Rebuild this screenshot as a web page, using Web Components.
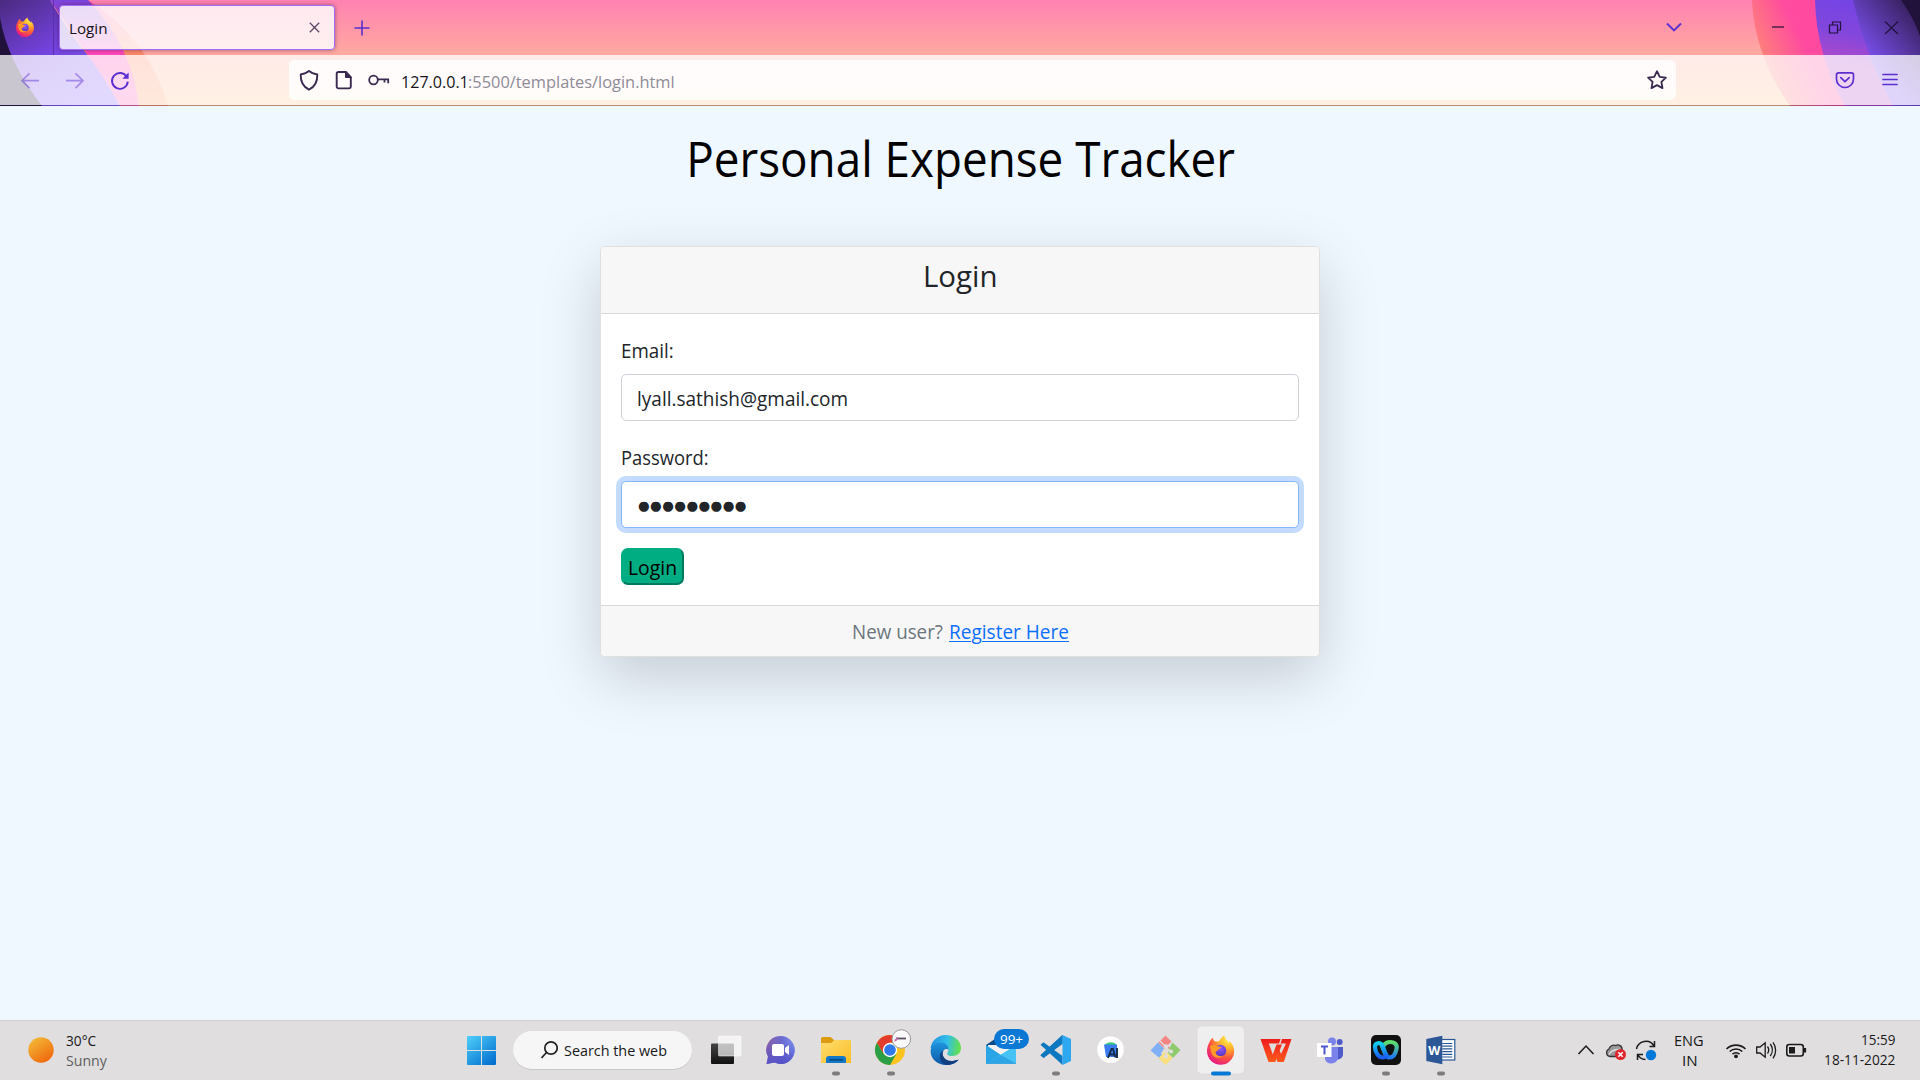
<!DOCTYPE html>
<html lang="en">
<head>
<meta charset="utf-8">
<title>Login</title>
<style>
html,body{margin:0;padding:0}
body{width:1920px;height:1080px;overflow:hidden;background:#eff7ff;font-family:"Open Sans","Noto Sans",sans-serif;color:#212529;display:flex;flex-direction:column}
</style>
</head>
<body>
<browser-chrome></browser-chrome>
<login-page></login-page>
<task-bar></task-bar>
<script>
const define = (name, html, after) => {
  const tpl = document.createElement('template');
  tpl.innerHTML = html;
  customElements.define(name, class extends HTMLElement {
    connectedCallback() {
      if (this.shadowRoot) return;
      this.attachShadow({mode: 'open'}).appendChild(tpl.content.cloneNode(true));
      if (after) after(this);
    }
  });
};

/* Single-line label whose visible glyphs span exactly the width in "w". */
const pen = document.createElement('canvas').getContext('2d');
define('fit-text', `<style>
:host{display:block;flex:none;white-space:nowrap}
span{display:inline-block;transform-origin:0 50%}
:host([underline]) span{text-decoration:underline;text-decoration-thickness:1.3px;text-underline-offset:2px;text-decoration-skip-ink:auto}
</style><span><slot></slot></span>`, el => {
  const w = parseFloat(el.getAttribute('w'));
  const cs = getComputedStyle(el);
  pen.font = cs.fontWeight + ' ' + cs.fontSize + ' ' + cs.fontFamily;
  const m = pen.measureText(el.textContent);
  const k = w / (m.actualBoundingBoxRight + m.actualBoundingBoxLeft);
  el.style.width = w + 'px';
  el.shadowRoot.querySelector('span').style.transform = `translateX(${m.actualBoundingBoxLeft * k}px) scaleX(${k})`;
});

define('theme-art', `<style>:host{display:block}svg{display:block}</style>
<svg width="1920" height="106" viewBox="0 0 1920 106">
<defs>
<linearGradient id="base" x1="0" y1="0" x2="0" y2="1"><stop offset="0" stop-color="#ff82b2"/><stop offset=".5" stop-color="#ffa8a0"/><stop offset="1" stop-color="#ffc488"/></linearGradient>
<linearGradient id="lp" x1="0" y1="0" x2=".7" y2="1"><stop offset="0" stop-color="#4a2a80"/><stop offset=".5" stop-color="#7442dd"/><stop offset="1" stop-color="#8860ff"/></linearGradient>
<linearGradient id="lk" x1="0" y1="0" x2="0" y2="1"><stop offset="0" stop-color="#7c45dd"/><stop offset=".25" stop-color="#b845cf"/><stop offset=".5" stop-color="#ff45b8"/><stop offset="1" stop-color="#ff6bbb"/></linearGradient>
<linearGradient id="lo" x1="0" y1="0" x2="0" y2="1"><stop offset="0" stop-color="#ff4aa2"/><stop offset=".45" stop-color="#fb846a"/><stop offset="1" stop-color="#ffa06c"/></linearGradient>
<linearGradient id="ro" gradientUnits="userSpaceOnUse" x1="1756" y1="40" x2="1794" y2="22"><stop offset="0" stop-color="#ff7e7c"/><stop offset="1" stop-color="#ff4aa0"/></linearGradient>
<linearGradient id="rp" gradientUnits="userSpaceOnUse" x1="1850" y1="0" x2="1838" y2="65"><stop offset="0" stop-color="#7444e4"/><stop offset=".5" stop-color="#8246dc"/><stop offset="1" stop-color="#b44bc9"/></linearGradient>
<linearGradient id="rd" gradientUnits="userSpaceOnUse" x1="1865" y1="55" x2="1912" y2="16"><stop offset="0" stop-color="#7b50ef"/><stop offset="1" stop-color="#3c2468"/></linearGradient>
</defs>
<rect width="1920" height="106" fill="url(#base)"/>
<path d="M88 0Q150 40 168 106H120L50 0Z" fill="url(#lo)"/>
<path d="M50 0H88Q132 46 139 106H120L86 52Z" fill="url(#lk)"/>
<path d="M0 0H50Q66 28 86 53Q104 76 120 106H0Z" fill="url(#lp)"/>
<path d="M0 18Q8 62 42 106H0Z" fill="#20123a"/>
<path d="M1752 0Q1754 54 1790 106H1850V0Z" fill="url(#ro)"/>
<path d="M1815 0Q1816 54 1845 106H1900V0Z" fill="url(#rp)"/>
<path d="M1853 0Q1866 56 1893 106H1920V0Z" fill="url(#rd)"/>
<path d="M1901 0Q1914 18 1920 36V0Z" fill="#20123a"/>
<rect y="55" width="1920" height="50" fill="#fff" fill-opacity=".76"/>
<rect y="105" width="1920" height="1" fill="#20123a" fill-opacity=".32"/>
<rect x="53" width="1" height="55" fill="#5a2fae"/>
</svg>`);

const foxDefs = `<defs>
<radialGradient id="fx" cx=".78" cy=".1" r="1"><stop offset="0" stop-color="#fff44f"/><stop offset=".35" stop-color="#ffb02c"/><stop offset=".65" stop-color="#ff5a3c"/><stop offset="1" stop-color="#e31587"/></radialGradient>
<radialGradient id="fg" cx=".5" cy=".3" r=".7"><stop offset="0" stop-color="#9059ff"/><stop offset="1" stop-color="#5b35c0"/></radialGradient></defs>`;
const fox = `<path d="M3 5C4 3 5 2 6 0.8C6.4 2.8 7.4 4 8.6 4.7L12 4.6C13.5 3.6 13.6 1.4 17.5-1.2C18 1 19 2.5 20.6 3.8L22 6.5C22.4 5.6 22.6 5 22.5 4C27.5 8.4 28.3 14.4 26.7 19C24.6 24.7 19.7 28 14 28C6.5 28 0.6 22.3 .3 14.8C.2 11 1.5 7.6 3 5Z" fill="url(#fx)"/>
<circle cx="13.8" cy="13.8" r="5.8" fill="url(#fg)"/>
<path d="M3.5 9.2C6.5 7.4 9.6 8.3 11 9.6L14.6 10.2C14.2 11.7 12 12.2 11.3 13.2C10.7 14.6 9.3 14.3 8.8 15.8C9.5 19 13 20.3 16.6 18.7C13 22.5 6.3 21.8 4.5 15.6Z" fill="#ff9a26"/>`;

define('browser-chrome', `<style>
:host{display:grid;height:106px;flex:none;width:1920px;overflow:hidden}
:host>*{grid-area:1/1}
svg{display:block;flex:none}
.rows{display:flex;flex-direction:column;min-width:0}
.tabs{display:flex;height:55px;align-items:center}
.pin{margin:-2px 0 0 15px}
.tab{box-sizing:border-box;width:276px;height:45px;margin:0 18.5px 0 24px;border:1px solid #a46cf6;border-radius:4px;background:rgba(255,255,255,.82);box-shadow:0 0 4px rgba(60,20,60,.5);display:flex;align-items:center;justify-content:space-between;padding:1px 14px 0 9.5px;font-size:14.7px;line-height:20px;color:#15141a}
.win{margin-left:auto}
.nav{display:flex;height:50px;align-items:center}
.url{box-sizing:border-box;width:1387px;height:40px;border-radius:5px;background:rgba(255,255,255,.82);display:flex;align-items:center;margin-left:149px;padding:0 7px 0 8px;font-size:16.4px;line-height:24px}
.url svg{margin-right:11px}
.dim{color:#8f8b97}.url fit-text{padding-top:4px}
.star.star{margin:0 0 0 auto}
</style>
<theme-art></theme-art>
<div class="rows">
<div class="tabs">
 <svg class="pin" width="20" height="20" viewBox="-.5 -2 29 30">${foxDefs}${fox}</svg>
 <div class="tab"><fit-text w="36.5">Login</fit-text><svg width="11" height="11" viewBox="0 0 11 11" style="margin-top:-2px" stroke="#5b4a66" stroke-width="1.3"><path d="M.8 .8l9.4 9.4M10.2 .8L.8 10.2"/></svg></div>
 <svg width="16" height="16" viewBox="0 0 16 16" stroke="#5b2fd0" stroke-width="1.6"><path d="M8 .5v15M.5 8h15"/></svg>
 <svg class="win" width="260" height="40" viewBox="1660 7.5 260 40" fill="none" stroke="#20123a" stroke-width="1.2">
  <path d="M1667 23l7 7 7-7" stroke="#5b2fd0" stroke-width="1.9"/><path d="M1772 26.5h12"/><path d="M1829.5 24.5h8v8h-8zM1832.500 24.500v-3h8v8h-3"/><path d="M1885 21l13 12.500M1898 21l-13 12.500"/></svg>
</div>
<div class="nav">
 <svg width="140" height="50" viewBox="0 55 140 50" fill="none" stroke="#5b2fd0" stroke-width="1.7"><g opacity=".45"><path d="M39 80.700H22M29.500 73.300L22 80.700l7.500 7.400M66 80.700h17M75.500 73.300l7.500 7.400-7.500 7.400"/></g>
 <path stroke-width="1.9" d="M126.800 77a7.900 7.900 0 1 0 1 4.700"/><path d="M128.600 72.500v6.300h-6.300z" fill="#5b2fd0" stroke="none"/></svg>
 <div class="url">
  <svg width="24" height="24" viewBox="0 0 24 24" fill="none" stroke="#3a2a50" stroke-width="1.9" stroke-linejoin="round"><path d="M12 3C14 4.800 17.500 6 20.300 6.500C20.500 13 18.500 18.500 12 21.700C5.500 18.500 3.500 13 3.700 6.500C6.500 6 10 4.800 12 3Z"/></svg>
  <svg width="24" height="24" viewBox="0 0 24 24" fill="none" stroke="#3a2a50" stroke-width="1.9" stroke-linejoin="round"><path d="M14 4H6.500a1.800 1.800 0 0 0-1.800 1.800v12.800a1.800 1.800 0 0 0 1.800 1.800h10.500a1.800 1.800 0 0 0 1.800-1.800V9.200z"/><path d="M13.500 3.500v6h6z" fill="#3a2a50" stroke-width="1"/></svg>
  <svg width="24" height="24" viewBox="0 0 24 24" fill="none" stroke="#3a2a50" stroke-width="1.800"><circle cx="6.500" cy="12" r="4.300"/><path d="M10.800 11.300h10.400v4M17.500 11.300v3.300"/></svg>
  <fit-text w="63.500" style="color:#15141a">127.0.0.1</fit-text><fit-text w="204.500" class="dim" style="margin-left:3px">:5500/templates/login.html</fit-text>
  <svg class="star" width="24" height="24" viewBox="0 0 24 24" fill="none" stroke="#3a2a50" stroke-width="1.800" stroke-linejoin="round"><path d="M12 3.200l2.700 5.600 6.200.8-4.500 4.300 1.100 6.200-5.500-3-5.500 3 1.100-6.200-4.500-4.300 6.200-.8z"/></svg>
 </div>
 <svg style="margin-left:auto" width="90" height="50" viewBox="1830 55 90 50" fill="none" stroke="#5b2fd0" stroke-width="1.700" stroke-linecap="round" stroke-linejoin="round"><path d="M1838.500 72.800h13a2 2 0 0 1 2 2v4.200a8.500 8.500 0 0 1-17 0v-4.200a2 2 0 0 1 2-2zM1840.800 77.700l4.200 4 4.200-4M1883 74.500h14M1883 79.500h14M1883 84.500h14"/></svg>
</div>
</div>`);

define('form-field', `<style>
:host{display:flex;flex-direction:column;gap:8px;line-height:30px}
.box{box-sizing:border-box;height:47px;border:1px solid #ced4da;border-radius:5px;background:#fff;display:flex;align-items:center;padding:2px 0 0 16px}
:host([focused]) .box{border-color:#86b7fe;box-shadow:0 0 0 5px #c2dbfe}
</style><slot name="label"></slot><div class="box"><slot></slot></div>`);

define('login-card', `<style>
:host{display:flex;flex-direction:column;box-sizing:border-box;width:720px;height:411px;border:1px solid #dfdfdf;border-radius:5px;background:#fff;box-shadow:0 20px 60px rgba(0,0,0,.175);font-size:19.6px;overflow:visible}
header{box-sizing:border-box;height:67px;border-bottom:1px solid #d9d9d9;background:#f7f7f7;border-radius:4px 4px 0 0;display:flex;padding:11px 0 0 324px;font-size:29.400px;line-height:36px}
main{display:flex;flex-direction:column;padding:22px 20px 0;height:291px;box-sizing:border-box}
form-field+form-field{margin-top:22px}
.dots{font-family:"DejaVu Sans";font-size:13.400px;letter-spacing:.420px;margin-top:1px}
button{all:unset;box-sizing:border-box;width:63px;height:37px;margin-top:20px;border:2px solid;border-color:#00ad82 #007a5c #007a5c #00ad82;border-radius:7px;background:#00ad82;color:#000;padding:2px 0 0 6px;line-height:32px}
footer{box-sizing:border-box;height:51px;border-top:1px solid #d9d9d9;background:#f7f7f7;border-radius:0 0 4px 4px;display:flex;justify-content:center;gap:7px;line-height:52px;color:#6c757d;padding-left:1px}
.link{color:#0d6efd}
</style>
<header><fit-text w="70.500">Login</fit-text></header>
<main>
<form-field><fit-text slot="label" w="50.500" style="margin-left:1px">Email:</fit-text><fit-text w="209">lyall.sathish@gmail.com</fit-text></form-field>
<form-field focused><fit-text slot="label" w="85.500" style="margin-left:1px">Password:</fit-text><span class="dots">●●●●●●●●●</span></form-field>
<button><fit-text w="47">Login</fit-text></button>
</main>
<footer><fit-text w="89.500">New user?</fit-text><fit-text class="link" underline w="118">Register Here</fit-text></footer>`);

define('login-page', `<style>
:host{display:flex;flex-direction:column;align-items:center;height:914px;flex:none;background:#eff7ff;padding-top:22px;box-sizing:border-box}
h1{margin:0 0 58px;font-weight:400;font-size:49px;line-height:60px;color:#000;padding-left:4px}
</style><h1><fit-text w="545">Personal Expense Tracker</fit-text></h1><login-card></login-card>`);

const icons = {
task:`<defs><linearGradient id="a" x1="0" y1="0" x2="0" y2="1"><stop offset="0" stop-color="#444"/><stop offset="1" stop-color="#111"/></linearGradient></defs><rect x="13" y="23.500" width="23" height="20.500" rx="1" fill="url(#a)"/><rect x="20.500" y="16" width="22.500" height="20" rx="1" fill="#fff" fill-opacity=".68" stroke="#fff" stroke-opacity=".5"/>`,
chat:`<defs><linearGradient id="a" x1="0" y1="0" x2="1" y2="0"><stop offset="0" stop-color="#8c61a6"/><stop offset=".55" stop-color="#6a6ad0"/><stop offset="1" stop-color="#7b93ee"/></linearGradient><linearGradient id="b" x1="0" y1="0" x2="0" y2="1"><stop offset=".2" stop-color="#5552c8" stop-opacity="0"/><stop offset="1" stop-color="#5552c8"/></linearGradient></defs><path d="M27.500 16a14 14 0 1 1-6 26.500L13.500 44l1.500-7.200A14 14 0 0 1 27.500 16z" fill="url(#a)"/><path d="M27.500 16a14 14 0 1 1-6 26.500L13.500 44l1.500-7.200A14 14 0 0 1 27.500 16z" fill="url(#b)"/><rect x="19" y="24" width="12" height="12" rx="2" fill="#fff"/><path d="M32 28l4-3v10l-4-3z" fill="#fff"/>`,
files:`<defs><linearGradient id="a" x1="0" y1="0" x2="1" y2="1"><stop offset="0" stop-color="#ffdd70"/><stop offset="1" stop-color="#fbbd25"/></linearGradient></defs><path d="M13 18.500a1.500 1.500 0 0 1 1.500-1.500h8l3.500 3h15.500a1.500 1.500 0 0 1 1.500 1.500V30H13z" fill="#dc9b10"/><path d="M13 23h10l3.500-3H41.500a1.500 1.500 0 0 1 1.500 1.500V43H13z" fill="url(#a)"/><path d="M18 43v-4a3 3 0 0 1 3-3h14a3 3 0 0 1 3 3v4z" fill="#1478c9"/><path d="M21 39.800h14" stroke="#074e88" stroke-width="1.800"/>`,
chrome:`<g transform="translate(1 0)"><circle cx="26" cy="30" r="15" fill="#fcc31e"/><path d="M13 22.500A15 15 0 0 0 26 45l6.500-11.300L26 30l-6.500 3.700z" fill="#2c9f46"/><path d="M13 22.500A15 15 0 0 1 39 22.500H26l-6.500 11.200z" fill="#e33b2e"/><circle cx="26" cy="30" r="7.200" fill="#fff"/><circle cx="26" cy="30" r="5.800" fill="#3079ea"/></g><circle cx="38.300" cy="19" r="9.300" fill="#fafafa" stroke="#999" stroke-width="1"/><path d="M33 18.500h10" stroke="#5c5060" stroke-width="1.800" fill="none"/><path d="M31.500 20.500q2 0 3-3" stroke="#c466b0" stroke-width="1.800" fill="none"/>`,
edge:`<defs><linearGradient id="a" x1="0" y1=".2" x2="1" y2=".3"><stop offset="0" stop-color="#238fe0"/><stop offset=".55" stop-color="#31bfe8"/><stop offset="1" stop-color="#65e04c"/></linearGradient><linearGradient id="b" x1="0" y1="0" x2="0" y2="1"><stop offset="0" stop-color="#1e94dd"/><stop offset="1" stop-color="#0d58a5"/></linearGradient></defs><path d="M12.600 28C13.500 20.500 20 15 27.500 15c9 0 15.500 6 15.500 13 0 5-3.800 8-8.500 8-4.500 0-6-1.800-5-3.300 2.200-2.700 1-8.200-5-8.200-6 0-11 4-11.900 3.500z" fill="url(#a)"/><path d="M12.600 31C13 25 17 22.500 22.500 22.500c5 0 8.500 3.300 8 7.500-1-1.500-3.500-1.500-5 .5-3 4.500 1.500 11.500 9 10.500 2.500-.3 5-1.500 6-1.300C38 43 33 45 28 45c-9 0-15.600-6.500-15.400-14z" fill="url(#b)"/><path d="M25.500 30.500c-3 4.500 1.500 11.500 9 10.500 2.500-.3 5-1.500 6-1.300C38 43.300 33 45 28.500 45c-7-2-9.500-11-3-14.500z" fill="#123f80"/>`,
mail:`<path d="M13 25L28 15l15 10v18.500H13z" fill="#0b4a85"/><path d="M15 25h26v10H15z" fill="#f2f2f2"/><path d="M13 25l15 10L43 25v18.500H13z" fill="#29a5e6"/><path d="M13 43.500L43 25.500v18z" fill="#45c3f5"/><path d="M13 43.500h30L28 35z" fill="#1e8fdb" fill-opacity=".6"/><rect x="21" y="9" width="35" height="20" rx="10" fill="#0a78d4"/>`,
code:`<path d="M12.500 35.300L34.500 15v8.200L15.500 38z" fill="#0a6cb1"/><path d="M34.500 15v9L15.500 37.800l-3-2.500L34.500 15zM15.500 22.200L34.500 36v9L12.500 24.700z" fill="#0d78c0"/><path d="M34.500 15l8.500 4v22l-8.500 4z" fill="#2da8f0"/>`,
studio:`<circle cx="27.500" cy="29.500" r="13.300" fill="#fff"/><path d="M21.500 26a6.500 5 0 0 1 12.500 0z" fill="#39cf7a"/><path d="M21 24.500H34v12.500H23z" fill="#3b7df0"/><path d="M25 38l3.500-9h1.500L32.500 37.500M26.500 34.500h5M34 28V38" stroke="#152a4a" stroke-width="1.900" fill="none"/>`,
git:`<path d="M27.500 15.500l6 6-4 4 3 3-5 1-7-7z" fill="#f58585"/><path d="M20 22.500l6 6-3 5 2 2-3 3L12.500 30.500z" fill="#7fb0f8"/><path d="M34.500 22.500l8 7.500-7.500 8-5-5 1.500-5z" fill="#8fca6c"/><path d="M27.500 31l7 7-7 7-7-7z" fill="#f9df7d"/><path d="M22 21l11 11M28 26v11" stroke="#e0dedf" stroke-width="1.400"/><circle cx="28" cy="26.500" r="2.300" fill="#e0dedf"/><circle cx="33" cy="31.500" r="2.100" fill="#e0dedf"/><circle cx="28" cy="36.500" r="2.100" fill="#e0dedf"/>`,
fox:`<rect x="4" y="6" width="47.500" height="48" rx="5" fill="#f0eff0" stroke="#d8d6d7" stroke-width=".6"/>${foxDefs}<g transform="translate(13.700 16.800)">${fox}</g>`,
wps:`<defs><linearGradient id="a" x1="0" y1="0" x2="0" y2="1"><stop offset="0" stop-color="#ed1c1c"/><stop offset="1" stop-color="#ff5a1c"/></linearGradient></defs><path d="M12.500 19H32.500L31 23.500H20.800L24.800 34.500L28.500 24.500H34L27.300 42H20.500z" fill="url(#a)"/><path d="M34 19h9.500L35.800 42H29.500L28.300 38.500L31.500 30l1.500 4L38 23.500H32.500z" fill="url(#a)"/>`,
teams:`<circle cx="29" cy="21.500" r="4" fill="#7b83eb"/><circle cx="36.700" cy="22" r="3" fill="#5059c9"/><path d="M32 27h8v8a5 5 0 0 1-8 3.500z" fill="#5059c9"/><path d="M22 27h13v9.500a6.800 6.800 0 0 1-13 3z" fill="#7b83eb"/><rect x="14" y="23" width="14.500" height="14" fill="#fff"/><path d="M18 26.500h7M21.500 26.500v8" stroke="#5059c9" stroke-width="2"/>`,
webex:`<defs><linearGradient id="a" x1="0" y1="0" x2="0" y2="1"><stop offset="0" stop-color="#13d0ee"/><stop offset="1" stop-color="#1a5cf5"/></linearGradient><linearGradient id="b" x1="0" y1="0" x2="0" y2="1"><stop offset="0" stop-color="#5ee06c"/><stop offset="1" stop-color="#1d7af2"/></linearGradient></defs><rect x="13" y="15" width="30" height="30" rx="5" fill="#111"/><path d="M25.500 25.500c2-2.700 4-3.500 6.500-3.500 5 0 7.500 3 6.500 7-1 5-3.500 8.500-7 8.500-4.500 0-5.500-8-8-12.500" fill="none" stroke="url(#b)" stroke-width="4.200"/><path d="M30 34.500c-2 2.500-3.500 3-5.500 3-4.500 0-7.500-6-7.500-10.500 0-4.500 5-5 7.300-1.500 1.700 3 2.200 7.500 4.700 10.500" fill="none" stroke="url(#a)" stroke-width="4.200"/>`,
word:`<g transform="translate(-.7 0)"><rect x="28" y="19.500" width="14.500" height="20.500" fill="#fff" stroke="#2b5797" stroke-width="1.200"/><path d="M30 23.500h10M30 26.200h10M30 28.900h10M30 31.600h10M30 34.300h10M30 37h10" stroke="#2b5797" stroke-width="1.200"/><path d="M14 19l16-3.300v28.600L14 41z" fill="#2b5797"/></g>`
};
const plain = 'font-family="Open Sans" text-anchor="middle" fill="#fff"';
icons.mail += `<text x="38.500" y="24" font-size="13.500" ${plain}>99+</text>`;
icons.word += `<text x="21.300" y="34.500" font-size="12.500" font-weight="700" ${plain}>W</text>`;
const cells = [['task'],['chat'],['files',1],['chrome',1],['edge'],['mail'],['code',1],['studio'],['git'],['fox',2],['wps'],['teams'],['webex',1],['word',1]];

customElements.define('app-icon', class extends HTMLElement {
  connectedCallback() {
    if (this.shadowRoot) return;
    const run = this.getAttribute('state');
    const mark = run === '1' ? '<rect x="24" y="51.500" width="8" height="4" rx="2" fill="#7d7d7d"/>' : run === '2' ? '<rect x="18" y="51.500" width="20" height="4" rx="2" fill="#0078d4"/>' : '';
    this.attachShadow({mode: 'open'}).innerHTML = `<style>:host{display:block;width:55px;height:60px;flex:none}svg{display:block;overflow:visible}</style><svg width="55" height="60" viewBox="0 0 55 60">${icons[this.getAttribute('name')]}${mark}</svg>`;
  }
});

define('task-bar', `<style>
:host{display:flex;box-sizing:border-box;width:1920px;height:60px;flex:none;background:#e0dedf;box-shadow:inset 0 1px #cfcfd1;font-size:14.700px;line-height:20px;color:#191919}
svg{display:block;flex:none}
.weather{display:flex;width:467px;flex:none}
.weather svg{margin:0 11.500px 0 28px}
.col{display:flex;flex-direction:column;padding-top:10px;flex:none}
.sub{color:#5f5e60}
.search{box-sizing:border-box;width:179px;height:38px;border-radius:19px;background:#f6f6f6;box-shadow:0 1px #cac9ca;margin:11px 6px 0 17px;display:flex;padding:9px 0 0 28px;gap:6px;flex:none}
.tray{display:flex;flex:none;margin-left:104px}
.lang{align-items:center;width:28.500px;margin:0 21px 0 13px}
.clock{align-items:flex-end;width:70px;margin-left:16px;padding-top:9px}
</style>
<div class="weather"><svg width="26" height="60" viewBox="0 0 26 60"><defs><linearGradient id="s" x1=".1" y1="0" x2=".8" y2="1"><stop offset="0" stop-color="#f3bf38"/><stop offset="1" stop-color="#f0640c"/></linearGradient></defs><circle cx="13" cy="30" r="12.700" fill="url(#s)"/></svg><div class="col"><fit-text w="30">30°C</fit-text><fit-text class="sub" w="41.500">Sunny</fit-text></div></div>
<svg width="29" height="60" viewBox="0 0 29 60"><defs><linearGradient id="w" gradientUnits="userSpaceOnUse" x1="0" y1="16" x2="24" y2="45"><stop offset="0" stop-color="#4fd0fa"/><stop offset="1" stop-color="#0470cf"/></linearGradient></defs><path fill="url(#w)" d="M0 17a1 1 0 0 1 1-1h13v14H0zM15 16h13a1 1 0 0 1 1 1v13H15zM0 31h14v14H1a1 1 0 0 1-1-1zM15 31h14v13a1 1 0 0 1-1 1H15z"/></svg>
<div class="search"><svg width="17" height="19" viewBox="0 0 17 19" fill="none" stroke="#222" stroke-width="1.700"><circle cx="10" cy="8" r="6.200"/><path d="M5.500 12.500L.5 18"/></svg><fit-text w="103">Search the web</fit-text></div>
<div style="display:flex;flex:none">${cells.map(c => `<app-icon name="${c[0]}" state="${c[1] || 0}"></app-icon>`).join('')}</div>
<div class="tray">
<svg width="90" height="60" viewBox="1572 1020 90 60" fill="none" stroke="#1b1b1b" stroke-width="1.500"><path d="M1578.500 1054l7.500-8 7.500 8"/>
<path d="M1609.500 1056.500a4 4 0 0 1-.5-7.500c.5-3 4-4.500 6.500-3.500 3-1.500 7 .5 6.500 4a4 4 0 0 1-1.500 7z" fill="#999" stroke="#333" stroke-width="1.300"/><path d="M1609 1054.500q3-5.500 11-5" stroke="#ddd" stroke-width="1.500"/><circle cx="1620.500" cy="1054.500" r="5.500" fill="#e0242c" stroke="none"/><path d="M1618.300 1052.300l4.400 4.400M1622.700 1052.300l-4.400 4.400" stroke="#fff" stroke-width="1.600"/>
<path d="M1636.500 1049a9.500 9.500 0 0 1 17.500-3M1654.500 1041v5.500h-5M1637.500 1054a9 9 0 0 0 8 5.500M1637.500 1060v-5.500h5.500"/><circle cx="1651" cy="1055" r="5.200" fill="#0078d7" stroke="none"/></svg>
<div class="col lang"><fit-text w="28">ENG</fit-text><fit-text w="13.500">IN</fit-text></div>
<svg width="84" height="60" viewBox="1725 1020 84 60" fill="none" stroke="#1b1b1b" stroke-width="1.600"><path d="M1726.500 1049a13.500 13.500 0 0 1 19 0M1729.700 1051.500a9.300 9.300 0 0 1 12.600 0M1732.500 1054.200a5.200 5.200 0 0 1 7 0"/><circle cx="1736" cy="1056.300" r="1.900" fill="#1b1b1b" stroke="none"/>
<path stroke-width="1.300" d="M1756.700 1047v6h3.300l5.200 4.200v-14.400l-5.200 4.200zM1767.500 1046.500a6 6 0 0 1 0 7M1770.300 1044a10 10 0 0 1 0 12M1773 1042.300a13.500 13.500 0 0 1 0 16"/>
<rect x="1786.800" y="1044.500" width="16.500" height="11.500" rx="2.500"/><rect x="1789" y="1047" width="6" height="6.500" fill="#1b1b1b" stroke="none"/><path d="M1805 1048v4.500" stroke-width="2.200"/></svg>
<div class="col clock"><fit-text w="33">15:59</fit-text><fit-text w="70">18-11-2022</fit-text></div>
</div>`);
</script>
</body>
</html>
